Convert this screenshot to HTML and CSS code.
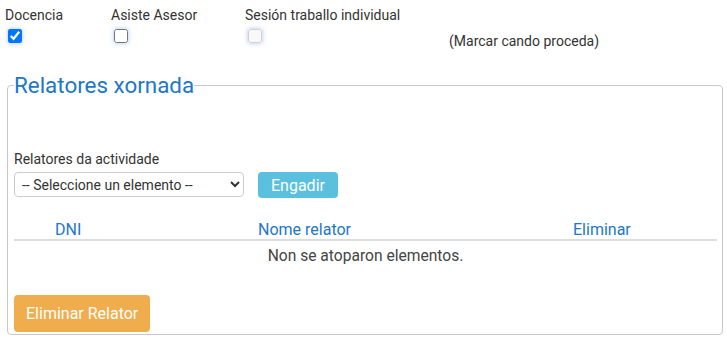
FILE: index.html
```html
<!DOCTYPE html>
<html lang="gl">
<head>
  <meta charset="UTF-8">
  <title>Relatores xornada</title>
  <link rel="stylesheet" href="styles.css">
</head>
<body>

  <!-- Opcions da sesion -->
  <div class="flags">
    <div class="flag flag-docencia">
      <label for="docencia">Docencia</label>
      <input type="checkbox" id="docencia" checked>
    </div>
    <div class="flag flag-asesor">
      <label for="asesor">Asiste Asesor</label>
      <input type="checkbox" id="asesor">
    </div>
    <div class="flag flag-individual">
      <label for="individual">Sesión traballo individual</label>
      <input type="checkbox" id="individual" disabled>
    </div>
    <div class="flag-note">(Marcar cando proceda)</div>
  </div>

  <!-- Relatores -->
  <fieldset class="relatores">
    <legend>Relatores xornada</legend>

    <div class="field-label">Relatores da actividade</div>
    <div class="add-row">
      <select id="relator-select">
        <option>-- Seleccione un elemento --</option>
      </select>
      <button class="btn btn-info">Engadir</button>
    </div>

    <table class="relatores-table">
      <thead>
        <tr>
          <th class="col-dni">DNI</th>
          <th class="col-nome">Nome relator</th>
          <th class="col-eliminar">Eliminar</th>
        </tr>
      </thead>
      <tbody>
        <tr>
          <td colspan="3" class="empty">Non se atoparon elementos.</td>
        </tr>
      </tbody>
    </table>

    <button class="btn btn-warning">Eliminar Relator</button>
  </fieldset>

</body>
</html>
```

FILE: styles.css
```css
body {
  margin: 0;
  padding: 0;
  font-family: Roboto, "Liberation Sans", Arial, sans-serif;
  font-size: 14px;
  color: #333;
  background: #fff;
}

/* top checkbox row */
.flags {
  display: flex;
  align-items: flex-start;
  padding: 7px 0 0 5px;
  height: 42px;
}

.flag {
  display: flex;
  flex-direction: column;
  align-items: flex-start;
  line-height: 16px;
}

.flag-docencia { width: 106px; }
.flag-asesor { width: 134px; }
.flag-individual { width: 204px; }

.flag input {
  width: 14px;
  height: 14px;
  margin: 6px 0 0 3px;
  box-shadow: 0 0 5px rgba(102, 150, 235, 0.55);
}

.flag-note {
  margin-top: 26px;
  line-height: 16px;
}

/* fieldset */
.relatores {
  margin: 23px 4px 0 7px;
  padding: 0 5px 2px 6px;
  border: 1px solid #c8c8c8;
  border-radius: 4px;
}

.relatores legend {
  padding: 0;
  font-size: 22.4px;
  line-height: 26px;
  color: #2177c7;
}

.field-label {
  margin-top: 53px;
  line-height: 16px;
}

.add-row {
  display: flex;
  align-items: flex-start;
  gap: 14px;
  margin-top: 5px;
}

#relator-select {
  width: 230px;
  height: 25px;
  margin: 0;
  padding: 0 3px;
  font-family: inherit;
  font-size: 14px;
  font-variant-ligatures: none;
  color: #333;
  background: #fff;
  border: 1px solid #ccc;
  border-radius: 4px;
}

.btn {
  margin: 0;
  border: none;
  border-radius: 4px;
  color: #fff;
  font-family: inherit;
  font-size: 16px;
  cursor: pointer;
}

.btn-info {
  background-color: #5bc0de;
  height: 26px;
  padding: 5px 13px 3px;
  line-height: 18px;
}

.btn-warning {
  background-color: #f0ad4e;
  margin-top: 30px;
  padding: 8px 12px;
  line-height: 21px;
}

/* table */
.relatores-table {
  width: 100%;
  margin-top: 23px;
  border-collapse: collapse;
  font-size: 16px;
}

.relatores-table th {
  padding: 0;
  line-height: 18px;
  font-weight: normal;
  text-align: left;
  color: #2177c7;
  border-bottom: 2px solid #ddd;
}

.col-dni {
  width: 203px;
  padding-left: 41px !important;
}

.col-nome { width: 315px; }

.relatores-table td.empty {
  padding: 6px 0 0;
  line-height: 18px;
  font-size: 15.6px;
  text-align: center;
  color: #444;
}
```
